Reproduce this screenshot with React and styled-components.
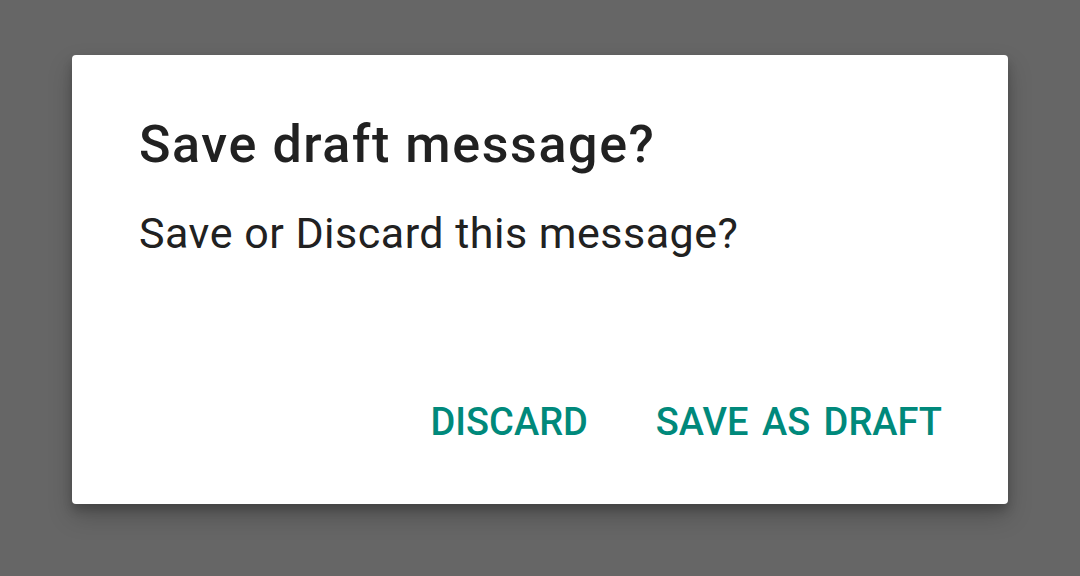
import React from "react";
import styled, { createGlobalStyle } from "styled-components";

const Global = createGlobalStyle`
  html, body { margin: 0; padding: 0; }
  body { background: #666666; font-family: Roboto, "Noto Sans", sans-serif; }
`;

const Screen = styled.div`
  width: 1080px;
  height: 576px;
  background: #666666;
  padding: 55px 72px 0;
  box-sizing: border-box;
`;

const Dialog = styled.div`
  width: 936px;
  height: 449px;
  background: #ffffff;
  border-radius: 4px;
  box-shadow: 0 12px 24px rgba(0, 0, 0, 0.22), 0 6px 10px rgba(0, 0, 0, 0.18);
  box-sizing: border-box;
  display: flex;
  flex-direction: column;
  padding: 60px 67px 0;
`;

const Title = styled.h2`
  margin: 0;
  font-size: 52px;
  font-weight: 500;
  line-height: 60px;
  letter-spacing: 1.6px;
  color: #212121;
`;

const Body = styled.p`
  margin: 30px 0 0;
  font-size: 43px;
  font-weight: 400;
  line-height: 56px;
  letter-spacing: 0.5px;
  color: #212121;
  flex: 1;
`;

const Actions = styled.div`
  display: flex;
  justify-content: flex-end;
  gap: 68px;
  margin-right: -1px;
  padding-bottom: 58px;
`;

const ActionButton = styled.button`
  border: none;
  background: none;
  padding: 0;
  font-family: Roboto, "Noto Sans", sans-serif;
  font-size: 38px;
  font-weight: 500;
  line-height: 48px;
  word-spacing: 4px;
  color: #00897b;
  cursor: pointer;
`;

export default function App() {
  return (
    <>
      <Global />
      <Screen>
        <Dialog>
          <Title>Save draft message?</Title>
          <Body>Save or Discard this message?</Body>
          <Actions>
            <ActionButton>DISCARD</ActionButton>
            <ActionButton>SAVE AS DRAFT</ActionButton>
          </Actions>
        </Dialog>
      </Screen>
    </>
  );
}
